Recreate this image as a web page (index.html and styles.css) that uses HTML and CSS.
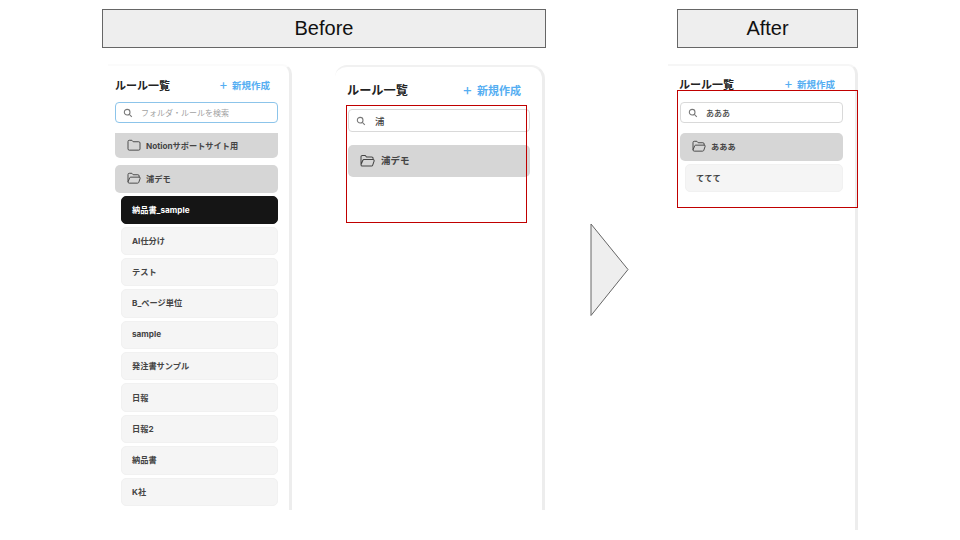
FILE: index.html
```html
<!DOCTYPE html>
<html lang="en">
<head>
  <meta charset="UTF-8" />
  <title>Before / After</title>
  <link rel="stylesheet" href="styles.css">
</head>
<body>
  <div class="slide">
    <div class="label label-before">Before</div>
    <div class="label label-after">After</div>

    <!-- full list -->
    <div class="panel panel-a">
      <div class="panel-head">
        <span class="title">ルール一覧</span>
        <span class="new"><span class="plus">+</span> 新規作成</span>
      </div>
      <div class="search search-focus">
        <svg class="search-icon" viewBox="0 0 12 12"><circle cx="5" cy="5" r="3.4"/><path d="M7.6 7.6 10.6 10.6"/></svg>
        <span class="placeholder">フォルダ・ルールを検索</span>
      </div>
      <div class="list">
        <div class="folder folder-cut">
          <svg class="folder-icon" viewBox="0 0 16 14"><path d="M1 3a1.5 1.5 0 0 1 1.5-1.5h3L7 3.2h6.500A1.500 1.500 0 0 1 15 4.700v6.800A1.500 1.500 0 0 1 13.500 13h-11A1.500 1.500 0 0 1 1 11.500z"/></svg>
          <span>Notionサポートサイト用</span>
        </div>
        <div class="folder folder-open">
          <svg class="folder-icon" viewBox="0 0 16 14"><path d="M1 11.500V3a1.500 1.500 0 0 1 1.500-1.500h3L7 3.200h5.500A1.500 1.500 0 0 1 14 4.700v1.300M1 11.500 3 6.800A1.200 1.200 0 0 1 4.100 6H14a1.200 1.200 0 0 1 1.100 1.600l-1.500 4.400a1.500 1.500 0 0 1-1.400 1H2.500A1.500 1.500 0 0 1 1 11.500z"/></svg>
          <span>浦デモ</span>
        </div>
        <div class="rule rule-active">納品書_sample</div>
        <div class="rule">AI仕分け</div>
        <div class="rule">テスト</div>
        <div class="rule">B_ページ単位</div>
        <div class="rule">sample</div>
        <div class="rule">発注書サンプル</div>
        <div class="rule">日報</div>
        <div class="rule">日報2</div>
        <div class="rule">納品書</div>
        <div class="rule">K社</div>
      </div>
    </div>

    <!-- search result, before -->
    <div class="panel panel-b">
      <div class="panel-head">
        <span class="title">ルール一覧</span>
        <span class="new"><span class="plus">+</span> 新規作成</span>
      </div>
      <div class="search">
        <svg class="search-icon" viewBox="0 0 12 12"><circle cx="5" cy="5" r="3.4"/><path d="M7.6 7.6 10.6 10.6"/></svg>
        <span class="query">浦</span>
      </div>
      <div class="folder folder-open">
        <svg class="folder-icon" viewBox="0 0 16 14"><path d="M1 11.500V3a1.500 1.500 0 0 1 1.500-1.500h3L7 3.200h5.500A1.500 1.500 0 0 1 14 4.700v1.300M1 11.500 3 6.800A1.200 1.200 0 0 1 4.100 6H14a1.200 1.200 0 0 1 1.100 1.600l-1.500 4.400a1.500 1.500 0 0 1-1.400 1H2.500A1.500 1.500 0 0 1 1 11.500z"/></svg>
        <span>浦デモ</span>
      </div>
    </div>

    <!-- search result, after -->
    <div class="panel panel-c">
      <div class="panel-head">
        <span class="title">ルール一覧</span>
        <span class="new"><span class="plus">+</span> 新規作成</span>
      </div>
      <div class="search">
        <svg class="search-icon" viewBox="0 0 12 12"><circle cx="5" cy="5" r="3.4"/><path d="M7.6 7.6 10.6 10.6"/></svg>
        <span class="query">あああ</span>
      </div>
      <div class="list">
        <div class="folder folder-open">
          <svg class="folder-icon" viewBox="0 0 16 14"><path d="M1 11.500V3a1.500 1.500 0 0 1 1.500-1.500h3L7 3.200h5.500A1.500 1.500 0 0 1 14 4.700v1.300M1 11.500 3 6.800A1.200 1.200 0 0 1 4.100 6H14a1.200 1.200 0 0 1 1.100 1.600l-1.500 4.400a1.500 1.500 0 0 1-1.400 1H2.500A1.500 1.500 0 0 1 1 11.500z"/></svg>
          <span>あああ</span>
        </div>
        <div class="rule">ててて</div>
      </div>
    </div>

    <div class="red-box red-box-b"></div>
    <div class="red-box red-box-c"></div>

    <svg class="arrow" viewBox="0 0 40 94"><path d="M1 1 38 46.500 1 92.500z"/></svg>
  </div>
</body>
</html>
```

FILE: styles.css
```css
* {
  box-sizing: border-box;
}

body {
  margin: 0;
  background: #fff;
  font-family: Inter, "Noto Sans CJK JP", sans-serif;
  overflow: hidden;
}

.slide {
  position: relative;
  width: 960px;
  height: 540px;
}

/* slide headings */
.label {
  position: absolute;
  top: 9px;
  height: 39px;
  display: flex;
  align-items: center;
  justify-content: center;
  background: #eeeeee;
  border: 1px solid #666;
  font-family: "Liberation Sans", sans-serif;
  font-size: 20px;
  color: #111;
}

.label-before {
  left: 102px;
  width: 444px;
}

.label-after {
  left: 677px;
  width: 181px;
}

/* screenshots */
.panel {
  position: absolute;
  background: #fff;
  border-top: 2px solid #f1f1f1;
  border-right: 3px solid #ededed;
  border-top-right-radius: 10px;
  display: flex;
  flex-direction: column;
}

.panel-a {
  left: 108px;
  top: 64px;
  width: 184px;
  height: 446px;
  padding: 0 11px 0 7px;
  border-top-color: #fbfbfb;
}

.panel-b {
  left: 335px;
  top: 65px;
  width: 210px;
  height: 445px;
  padding: 0 12px 0 13px;
  border-top-left-radius: 12px;
  border-top-right-radius: 14px;
}

.panel-c {
  left: 668px;
  top: 64px;
  width: 190px;
  height: 466px;
  padding: 0 12px 0 12px;
  border-top-color: #f6f6f6;
}

.panel-head {
  display: flex;
  justify-content: space-between;
  align-items: center;
  height: 36px;
  padding: 2px 8px 0 0;
}

.panel-b .panel-head {
  height: 42px;
  padding: 4px 9px 0 0;
  margin-left: -1px;
}

.panel-c .panel-head {
  padding-top: 0;
  margin-left: -1px;
}

.title {
  font-size: 11px;
  font-weight: 700;
  color: #222;
}

.panel-b .title {
  font-size: 12.200px;
}

.new {
  font-size: 9.500px;
  font-weight: 700;
  color: #55aef2;
}

.panel-b .new {
  font-size: 11px;
}

.plus {
  font-weight: 400;
  font-size: 1.400em;
  line-height: 1;
  margin-right: 2px;
}

/* search box */
.search {
  display: flex;
  align-items: center;
  gap: 8px;
  height: 21px;
  padding: 0 7px;
  background: #fff;
  border: 1px solid #d9d9d9;
  border-radius: 4px;
  font-size: 8px;
  font-weight: 500;
  color: #444;
}

.search-focus {
  border-color: #8cc4ea;
}

.panel-b .search {
  height: 23px;
  gap: 9px;
  font-size: 9.500px;
}

.search-icon {
  width: 10px;
  height: 10px;
  fill: none;
  stroke: #777;
  stroke-width: 1.300;
  flex: none;
}

.placeholder {
  color: #a2a2a2;
  font-weight: 400;
}

.list {
  display: flex;
  flex-direction: column;
  margin-top: 10px;
}

/* rows */
.folder {
  display: flex;
  align-items: center;
  gap: 5px;
  height: 28px;
  padding: 0 12px 2px;
  background: #d6d6d6;
  border-radius: 5px;
  font-size: 8.200px;
  font-weight: 700;
  color: #444;
  margin-bottom: 3px;
}

.folder-cut {
  height: 25px;
  border-radius: 0 0 5px 5px;
  margin-bottom: 7px;
}

.panel-b .folder {
  height: 32px;
  gap: 6px;
  margin-top: 13px;
  font-size: 9.500px;
}

.folder-icon {
  width: 14px;
  height: 12px;
  fill: none;
  stroke: #444;
  stroke-width: 1.100;
  flex: none;
}

.panel-b .folder-icon {
  width: 15px;
  height: 13px;
}

.rule {
  display: flex;
  align-items: center;
  height: 28.400px;
  margin: 0 0 3px 5px;
  padding: 0 10px 2px;
  background: #f5f5f5;
  border: 1px solid #f1f1f1;
  border-radius: 5px;
  font-size: 8.200px;
  font-weight: 700;
  color: #444;
}

.panel-a .rule {
  margin-left: 6px;
}

.rule-active {
  height: 27.500px;
  background: #151515;
  border-color: #151515;
  color: #fff;
}

/* annotations */
.red-box {
  position: absolute;
  border: 1px solid #c00000;
}

.red-box-b {
  left: 346px;
  top: 105px;
  width: 181px;
  height: 118px;
}

.red-box-c {
  left: 677px;
  top: 90px;
  width: 181px;
  height: 118px;
}

.arrow {
  position: absolute;
  left: 590px;
  top: 223px;
  width: 40px;
  height: 94px;
  fill: #eeeeee;
  stroke: #666;
  stroke-width: 1;
}
```
